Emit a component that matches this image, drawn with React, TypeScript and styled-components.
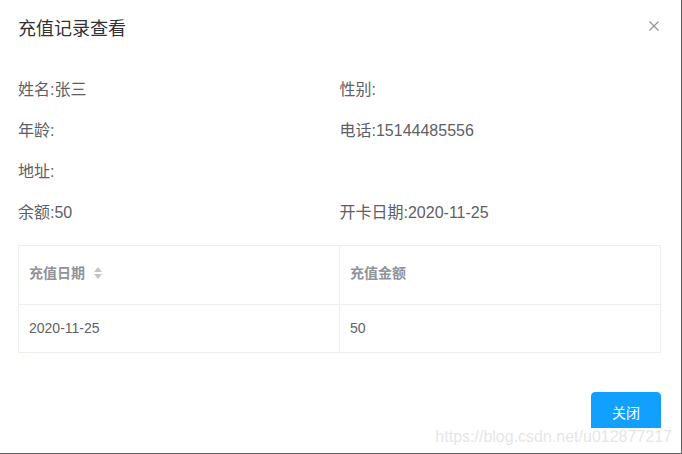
import React from 'react'
import styled, { createGlobalStyle } from 'styled-components'

const GlobalStyle = createGlobalStyle`
  html, body {
    margin: 0;
    padding: 0;
    background: #fff;
  }
  body {
    font-family: "Liberation Sans", "Noto Sans CJK SC", sans-serif;
  }
`

const Dialog = styled.div`
  position: relative;
  box-sizing: border-box;
  width: 682px;
  height: 454px;
  display: flex;
  flex-direction: column;
  background: #fff;
  border-right: 1px solid #5f5f5f;
  border-bottom: 1px solid #5f5f5f;
  overflow: hidden;
`

const Header = styled.div`
  display: flex;
  justify-content: space-between;
  align-items: flex-start;
  padding: 17px 22px 10px 18px;
`

const Title = styled.span`
  font-size: 18px;
  line-height: 24px;
  color: #303133;
`

const CloseButton = styled.button`
  display: flex;
  margin-top: 4px;
  padding: 0;
  border: 0;
  background: none;
  cursor: pointer;
`

const Body = styled.div`
  padding: 18px 20px 0 18px;
`

const InfoGrid = styled.div`
  display: grid;
  grid-template-columns: 1fr 1fr;
  grid-auto-rows: 41px;
  align-items: center;
`

const InfoItem = styled.div<{ $full?: boolean }>`
  grid-column: ${(p) => (p.$full ? '1 / -1' : 'auto')};
  font-size: 16px;
  line-height: 20px;
  color: #5e6066;
`

const Table = styled.table`
  width: 100%;
  margin-top: 12px;
  border-collapse: collapse;
  table-layout: fixed;
  font-size: 14px;
`

const Th = styled.th`
  border: 1px solid #ebeef5;
  padding: 15px 10px 19px;
  line-height: 24px;
  text-align: left;
  font-weight: bold;
  color: #909399;
`

const Td = styled.td`
  border: 1px solid #ebeef5;
  padding: 12px 10px;
  line-height: 23px;
  color: #606266;
`

const HeadLabel = styled.span`
  display: inline-flex;
  align-items: center;
  gap: 9px;
`

const Caret = styled.span`
  display: inline-flex;
  flex-direction: column;
  gap: 2px;
`

const Triangle = styled.i<{ $down?: boolean }>`
  display: block;
  width: 0;
  height: 0;
  border-left: 4.5px solid transparent;
  border-right: 4.5px solid transparent;
  ${(p) => (p.$down ? 'border-top: 5px solid #c0c4cc;' : 'border-bottom: 5px solid #c0c4cc;')}
`

const Footer = styled.div`
  display: flex;
  justify-content: flex-end;
  padding: 39px 20px 0 18px;
`

const PrimaryButton = styled.button`
  box-sizing: border-box;
  height: 40px;
  padding: 0 20px;
  border: 1px solid #12a0ff;
  border-radius: 4px;
  background: #12a0ff;
  color: #fff;
  font-family: "Liberation Sans", "Noto Sans CJK SC", sans-serif;
  font-size: 14px;
  cursor: pointer;
`

const Watermark = styled.div`
  position: absolute;
  right: 9px;
  top: 428px;
  background: #fff;
  color: #e6e6e6;
  font-family: "Liberation Sans", sans-serif;
  font-size: 16px;
  line-height: 17px;
  white-space: nowrap;
`

const info: { label: string; value: string; full?: boolean }[] = [
  { label: '姓名', value: '张三' },
  { label: '性别', value: '' },
  { label: '年龄', value: '' },
  { label: '电话', value: '15144485556' },
  { label: '地址', value: '', full: true },
  { label: '余额', value: '50' },
  { label: '开卡日期', value: '2020-11-25' },
]

const records = [{ date: '2020-11-25', amount: '50' }]

export default function App() {
  return (
    <>
      <GlobalStyle />
      <Dialog>
        <Header>
          <Title>充值记录查看</Title>
          <CloseButton aria-label="关闭">
            <svg width="10" height="10" viewBox="0 0 10 10">
              <path d="M0.5 0.5 L9.5 9.5 M9.5 0.5 L0.5 9.5" stroke="#909399" strokeWidth="1.2" fill="none" />
            </svg>
          </CloseButton>
        </Header>
        <Body>
          <InfoGrid>
            {info.map((item) => (
              <InfoItem key={item.label} $full={item.full}>
                {item.label}:{item.value}
              </InfoItem>
            ))}
          </InfoGrid>
          <Table>
            <thead>
              <tr>
                <Th>
                  <HeadLabel>
                    充值日期
                    <Caret>
                      <Triangle />
                      <Triangle $down />
                    </Caret>
                  </HeadLabel>
                </Th>
                <Th>充值金额</Th>
              </tr>
            </thead>
            <tbody>
              {records.map((r) => (
                <tr key={r.date}>
                  <Td>{r.date}</Td>
                  <Td>{r.amount}</Td>
                </tr>
              ))}
            </tbody>
          </Table>
        </Body>
        <Footer>
          <PrimaryButton>关闭</PrimaryButton>
        </Footer>
        <Watermark>https://blog.csdn.net/u012877217</Watermark>
      </Dialog>
    </>
  )
}
